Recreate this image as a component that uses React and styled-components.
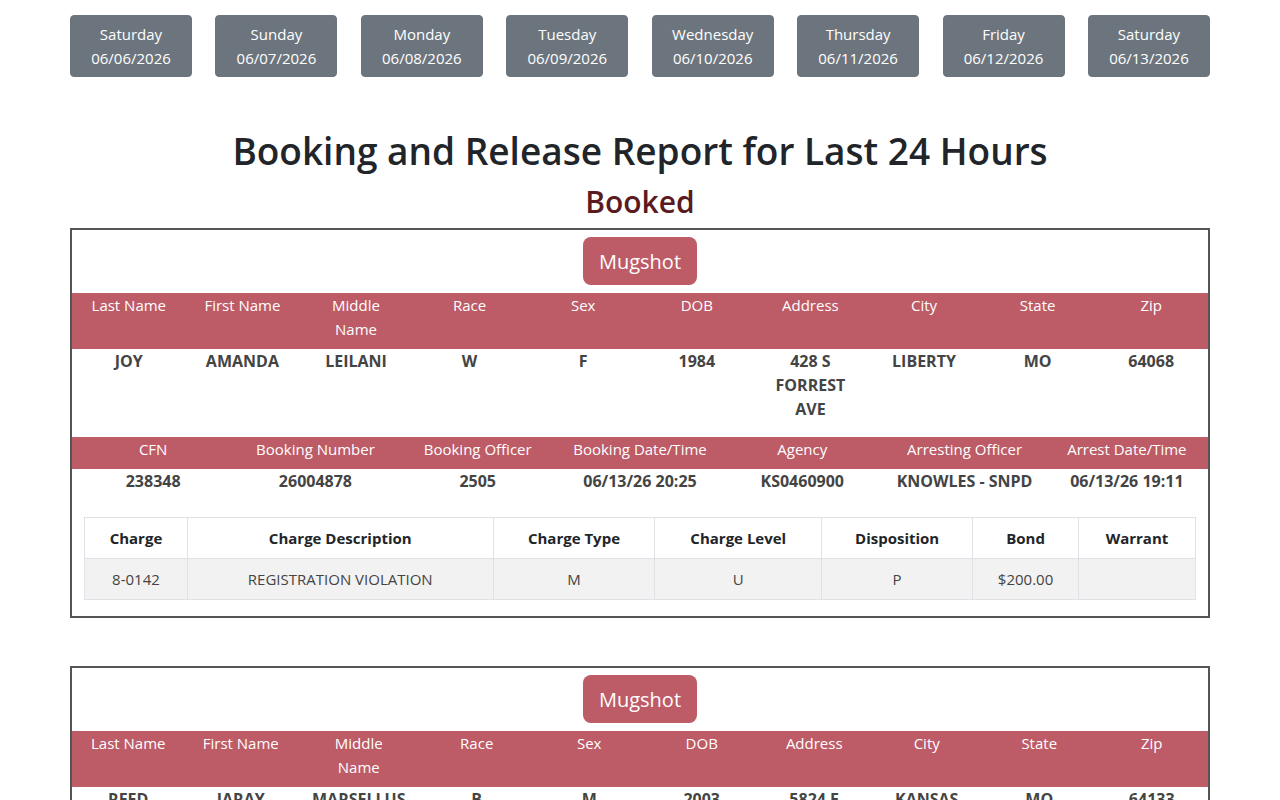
import React from 'react';
import styled, { createGlobalStyle } from 'styled-components';

const GlobalStyle = createGlobalStyle`
  body {
    margin: 0;
    background: #fff;
    font-family: "Open Sans", "Noto Sans", sans-serif;
    color: #212529;
  }
`

const Page = styled.div`
  width: 1140px;
  margin: 0 auto;
  padding-top: 15px;
`

const DayBar = styled.div`
  display: flex;
  justify-content: space-between;
`

const DayButton = styled.button`
  width: 122px;
  height: 62px;
  background: #6c757d;
  border: 1px solid #6c757d;
  border-radius: 4px;
  color: #fff;
  font-family: inherit;
  font-size: 15px;
  line-height: 24px;
  padding: 6px 0;
  cursor: pointer;
`

const Title = styled.h1`
  text-align: center;
  font-size: 37px;
  font-weight: 600;
  line-height: 46px;
  margin: 51px 0 0 0;
  color: #212529;
`

const SubTitle = styled.h2`
  text-align: center;
  font-size: 30px;
  font-weight: 600;
  line-height: 40px;
  margin: 8px 0 6px 0;
  color: #5a1a20;
`

const Card = styled.div`
  border: 2px solid #555;
  margin-bottom: 48px;
`

const MugRow = styled.div`
  display: flex;
  justify-content: center;
  padding: 7px 0 8px;
`

const MugButton = styled.button`
  height: 48px;
  padding: 0 16px;
  background: #bd5b67;
  border: none;
  border-radius: 8px;
  color: #fff;
  font-family: inherit;
  font-size: 20px;
  cursor: pointer;
`

const Grid = styled.div`
  display: grid;
  grid-template-columns: repeat(${p => p.cols}, 1fr);
`

const HeadCell = styled.div`
  background: #bd5b67;
  color: #fff;
  font-size: 15px;
  line-height: 24px;
  text-align: center;
  padding: 0 ${p => p.$pad}px 8px;
`

const DataCell = styled.div`
  color: #444;
  font-weight: 700;
  font-size: 16px;
  line-height: 24px;
  text-align: center;
  padding: 0 ${p => p.$pad}px 16px;
  overflow-wrap: break-word;
`

const ChargeWrap = styled.div`
  padding: 8px 12px 16px;
`

const ChargeTable = styled.table`
  width: 100%;
  border-collapse: collapse;
  font-size: 15px;
`

const Th = styled.th`
  border: 1px solid #dee2e6;
  padding: 8px;
  height: 41px;
  font-weight: 700;
  line-height: 24px;
  color: #212529;
  text-align: center;
  box-sizing: border-box;
`

const Td = styled.td`
  border: 1px solid #dee2e6;
  background: #f2f2f2;
  padding: 8px;
  height: 41px;
  line-height: 24px;
  color: #444;
  text-align: center;
  box-sizing: border-box;
`

const days = [
  ['Saturday', '06/06/2026'],
  ['Sunday', '06/07/2026'],
  ['Monday', '06/08/2026'],
  ['Tuesday', '06/09/2026'],
  ['Wednesday', '06/10/2026'],
  ['Thursday', '06/11/2026'],
  ['Friday', '06/12/2026'],
  ['Saturday', '06/13/2026'],
]

const personHeads = ['Last Name', 'First Name', 'Middle Name', 'Race', 'Sex', 'DOB', 'Address', 'City', 'State', 'Zip']
const bookHeads = ['CFN', 'Booking Number', 'Booking Officer', 'Booking Date/Time', 'Agency', 'Arresting Officer', 'Arrest Date/Time']
const chargeHeads = [
  ['Charge', 103], ['Charge Description', 306], ['Charge Type', 162], ['Charge Level', 167],
  ['Disposition', 151], ['Bond', 106], ['Warrant', 117],
]

const records = [
  {
    person: ['JOY', 'AMANDA', 'LEILANI', 'W', 'F', '1984', '428 S FORREST AVE', 'LIBERTY', 'MO', '64068'],
    booking: ['238348', '26004878', '2505', '06/13/26 20:25', 'KS0460900', 'KNOWLES - SNPD', '06/13/26 19:11'],
    charges: [['8-0142', 'REGISTRATION VIOLATION', 'M', 'U', 'P', '$200.00', '']],
  },
  {
    person: ['REED', 'JARAY', 'MARSELLUS', 'B', 'M', '2003', '5824 E 15TH ST', 'KANSAS CITY', 'MO', '64133'],
    booking: ['238349', '26004879', '2511', '06/13/26 21:02', 'KS0460900', 'MARTIN - SNPD', '06/13/26 20:15'],
    charges: [['4-0216', 'DRIVING WHILE SUSPENDED', 'M', 'U', 'P', '$500.00', '']],
  },
]

const Record = ({ rec }) => (
  <Card>
    <MugRow><MugButton>Mugshot</MugButton></MugRow>
    <Grid cols={10}>
      {personHeads.map(h => <HeadCell key={h} $pad={15}>{h}</HeadCell>)}
      {rec.person.map((v, i) => <DataCell key={i} $pad={15}>{v}</DataCell>)}
    </Grid>
    <Grid cols={7}>
      {bookHeads.map(h => <HeadCell key={h} $pad={6}>{h}</HeadCell>)}
      {rec.booking.map((v, i) => <DataCell key={i} $pad={6}>{v}</DataCell>)}
    </Grid>
    <ChargeWrap>
      <ChargeTable>
        <thead>
          <tr>{chargeHeads.map(([h, w]) => <Th key={h} style={{ width: w }}>{h}</Th>)}</tr>
        </thead>
        <tbody>
          {rec.charges.map((c, i) => (
            <tr key={i}>{c.map((v, j) => <Td key={j}>{v}</Td>)}</tr>
          ))}
        </tbody>
      </ChargeTable>
    </ChargeWrap>
  </Card>
)

export default function App() {
  return (
    <>
      <GlobalStyle />
      <Page>
        <DayBar>
          {days.map(([d, dt], i) => (
            <DayButton key={i}>{d}<br />{dt}</DayButton>
          ))}
        </DayBar>
        <Title>Booking and Release Report for Last 24 Hours</Title>
        <SubTitle>Booked</SubTitle>
        {records.map((r, i) => <Record key={i} rec={r} />)}
      </Page>
    </>
  )
}
